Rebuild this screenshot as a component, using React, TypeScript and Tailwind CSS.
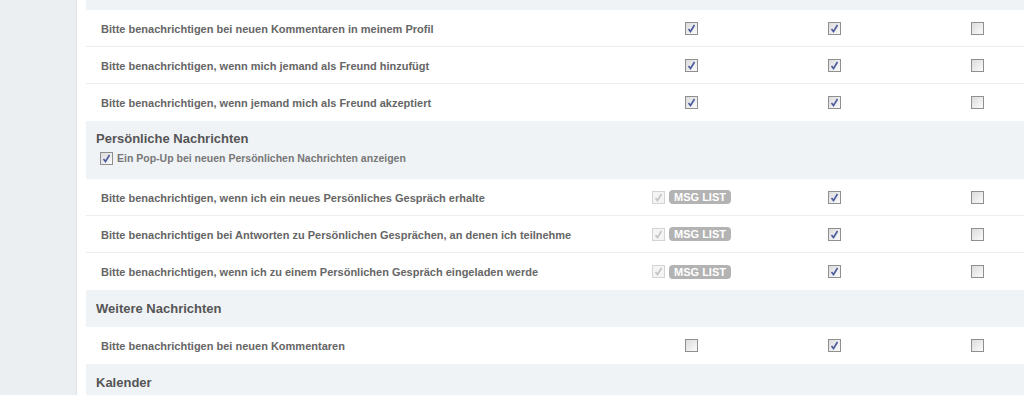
import React from "react";

type Row = { label: string; cols: (boolean | "msg")[] };

const sections: { title?: string; popup?: boolean; rows: Row[] }[] = [
  {
    rows: [
      { label: "Bitte benachrichtigen bei neuen Kommentaren in meinem Profil", cols: [true, true, false] },
      { label: "Bitte benachrichtigen, wenn mich jemand als Freund hinzufügt", cols: [true, true, false] },
      { label: "Bitte benachrichtigen, wenn jemand mich als Freund akzeptiert", cols: [true, true, false] },
    ],
  },
  {
    title: "Persönliche Nachrichten",
    popup: true,
    rows: [
      { label: "Bitte benachrichtigen, wenn ich ein neues Persönliches Gespräch erhalte", cols: ["msg", true, false] },
      { label: "Bitte benachrichtigen bei Antworten zu Persönlichen Gesprächen, an denen ich teilnehme", cols: ["msg", true, false] },
      { label: "Bitte benachrichtigen, wenn ich zu einem Persönlichen Gespräch eingeladen werde", cols: ["msg", true, false] },
    ],
  },
  {
    title: "Weitere Nachrichten",
    rows: [{ label: "Bitte benachrichtigen bei neuen Kommentaren", cols: [false, true, false] }],
  },
  { title: "Kalender", rows: [] },
];

function Checkbox({ checked, disabled }: { checked: boolean; disabled?: boolean }) {
  return (
    <span
      className={
        "inline-flex h-[13px] w-[13px] shrink-0 items-center justify-center border " +
        (disabled
          ? "border-[#d4d4d4] bg-[#f4f4f4]"
          : "border-[#8f8f8f] bg-gradient-to-br from-[#dcdcdc] to-[#fbfbfb]")
      }
    >
      {checked && (
        <svg width="9" height="9" viewBox="0 0 9 9">
          <path
            d="M1.5 5 L3.5 7.5 L7.5 1"
            fill="none"
            stroke={disabled ? "#c4c4c4" : "#4a5a9c"}
            strokeWidth="1.6"
          />
        </svg>
      )}
    </span>
  );
}

export default function App() {
  return (
    <div className="flex h-[395px] w-[1024px] overflow-hidden bg-white font-['Liberation_Sans',Arial,sans-serif]">
      <div className="w-[77px] shrink-0 border-r border-[#dde3e7] bg-[#ebeff2]" />
      <div className="w-[972px] shrink-0 pl-[9px]">
        <div className="h-[10px] bg-[#eff3f6]" />
        {sections.map((s, i) => (
          <div key={i}>
            {s.title && (
              <div className={"bg-[#eff3f6] px-[10px] " + (s.popup ? "pt-[10px] pb-[14px]" : "flex h-[37px] items-center")}>
                <div className="text-[13px] font-bold leading-[16px] text-[#555]">{s.title}</div>
                {s.popup && (
                  <label className="mt-[4px] flex h-[14px] items-center gap-[4px] pl-[4px] text-[10.5px] font-bold leading-[14px] text-[#777]">
                    <Checkbox checked />
                    Ein Pop-Up bei neuen Persönlichen Nachrichten anzeigen
                  </label>
                )}
              </div>
            )}
            {s.rows.map((r, j) => (
              <div
                key={j}
                className={"flex h-[37px] items-center bg-white " + (j < s.rows.length - 1 ? "border-b border-[#ebeef0]" : "")}
              >
                <div className="flex-1 pl-[15px] pt-[1px] text-[11px] font-bold leading-[14px] text-[#666]">{r.label}</div>
                {r.cols.map((c, k) => (
                  <div key={k} className="flex w-[143px] items-center justify-center">
                    {c === "msg" ? (
                      <div className="flex items-center gap-[4px] pl-[8px] -translate-x-[4px]">
                        <Checkbox checked disabled />
                        <span className="rounded-[4px] bg-[#b3b3b3] px-[5px] py-[1px] text-[11px] font-bold leading-[12px] text-white">
                          MSG LIST
                        </span>
                      </div>
                    ) : (
                      <Checkbox checked={c} />
                    )}
                  </div>
                ))}
              </div>
            ))}
          </div>
        ))}
        <div className="h-[40px] bg-[#eff3f6]" />
      </div>
    </div>
  );
}
